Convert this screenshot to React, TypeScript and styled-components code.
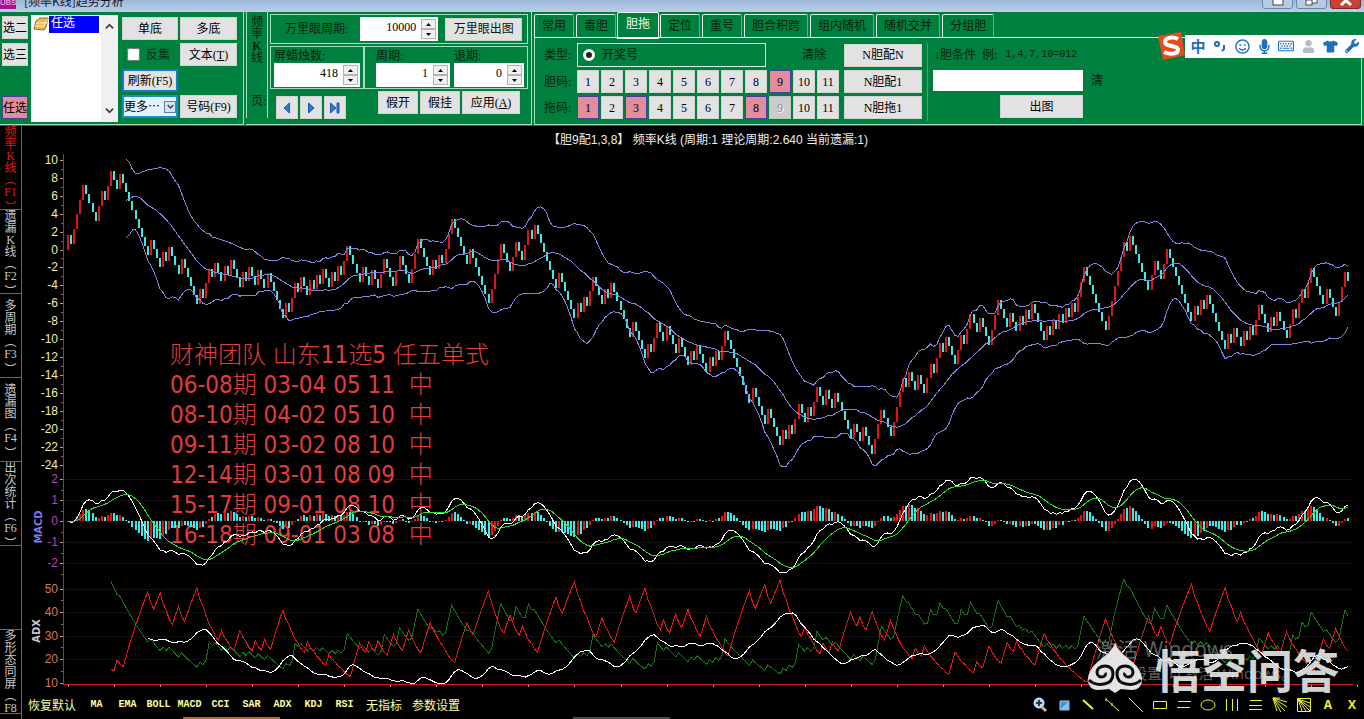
import React, { useEffect, useRef, useState } from "react";
import styled, { createGlobalStyle, css } from "styled-components";
import { FaMicrophone, FaRegKeyboard, FaRegSmile, FaTshirt, FaUser, FaWrench } from "react-icons/fa";

const GREEN = "#00803e";
const LINE = "#a8dcc0";
const TAB_LINE = "#18905c";
const UI_FONT = `"Liberation Serif", "Noto Sans CJK SC", serif`;
const HAN_FONT = `"Noto Sans CJK SC", sans-serif`;

const Global = createGlobalStyle`
  * { box-sizing: border-box; }
  body { margin: 0; background: #000; font-family: ${UI_FONT}; font-size: 12px; line-height: 14px; color: #000; }
  button, input { font: inherit; color: inherit; margin: 0; }
`;

const Page = styled.div`
  display: flex;
  flex-direction: column;
  min-height: 100vh;
  min-width: 1240px;
  overflow: hidden;
`;

/* ---------- title bar ---------- */

const TitleBar = styled.header`
  display: flex;
  align-items: flex-end;
  height: 12px;
  padding-bottom: 3px;
  overflow: hidden;
  background: linear-gradient(#9db8d8, #b9cfe8);
`;

const AppIcon = styled.span`
  width: 16px;
  height: 12px;
  background: #b0108c;
  color: #f7c6ec;
  font: 8px/12px "Liberation Sans", sans-serif;
  text-align: center;
`;

const TitleText = styled.h1`
  flex: 1;
  margin: 0 0 0 8px;
  font: 400 12px/16px ${HAN_FONT};
  color: #10182a;
`;

const WindowButtons = styled.div`
  display: flex;
  gap: 3px;
  margin-right: 3px;
`;

const WindowButton = styled.button<{ $close?: boolean }>`
  display: flex;
  align-items: flex-end;
  justify-content: center;
  width: 31px;
  height: 18px;
  padding: 0 0 2px;
  border: 1px solid ${(p) => (p.$close ? "#7c2a26" : "#6f87a6")};
  border-radius: 0 0 3px 3px;
  background: ${(p) => (p.$close ? "#c8402f" : "#b7cbe2")};
`;

/* ---------- ribbon ---------- */

const Ribbon = styled.section`
  display: flex;
  height: 114px;
  padding-bottom: 1px;
  background: ${GREEN};
`;

const Panel = styled.div`
  display: flex;
  border-bottom: 1px solid ${LINE};
  border-right: 1px solid ${LINE};
  margin-right: 2px;
`;

const Button = styled.button<{ $w?: number; $tone?: "pink" | "blue" | "focus" | "off" }>`
  display: inline-flex;
  align-items: center;
  justify-content: center;
  height: 23px;
  width: ${(p) => (p.$w ? `${p.$w}px` : "auto")};
  padding: 0;
  white-space: nowrap;
  border: 1px solid #d0d4d0;
  background: #e2e2e2;
  ${(p) => p.$tone === "pink" && css`background: #e48c9c; border-color: #46419a;`}
  ${(p) => p.$tone === "blue" && css`border: 2px solid #1477d0;`}
  ${(p) => p.$tone === "focus" && css`background: #e5f1fb; border: 2px solid #1c8cc8;`}
  ${(p) => p.$tone === "off" && css`background: #cccccc; border-color: #c0c4c0;`}
`;

const PickColumn = styled.div`
  display: flex;
  flex-direction: column;
  gap: 4px;
  padding: 4px 3px 5px 2px;
  & > :last-child { margin-top: auto; }
`;

const ListBox = styled.div`
  display: flex;
  justify-content: space-between;
  width: 87px;
  margin: 3px 4px 2px 0;
  background: #fff;
`;

const ListItem = styled.div`
  display: flex;
  height: 17px;
  margin: 1px 0 0 2px;
`;

const ListLabel = styled.span`
  width: 50px;
  padding-left: 2px;
  background: #0000ff;
  color: #fff;
  line-height: 14px;
`;

const ScrollBar = styled.div`
  display: flex;
  flex-direction: column;
  justify-content: space-between;
  align-items: center;
  width: 17px;
  padding: 7px 0;
  background: #f0f0f0;
`;

const ActionGrid = styled.div`
  display: grid;
  grid-template-columns: 56px 57px;
  grid-auto-rows: 23px;
  gap: 3px 2px;
  padding: 5px 6px 0 0;
`;

const CheckLabel = styled.label`
  display: flex;
  align-items: center;
  gap: 6px;
  padding-left: 5px;
  color: #06301a;
  input { width: 13px; height: 13px; margin: 0; }
`;

const MoreArrow = styled.span`
  display: flex;
  align-items: center;
  justify-content: center;
  width: 12px;
  height: 12px;
  margin-left: 4px;
  border: 1px solid #5c7ea8;
  background: #d3e3f6;
`;

const SideCaption = styled.div`
  display: flex;
  flex-direction: column;
  justify-content: space-between;
  width: 22px;
  padding: 4px 4px 11px 4px;
  margin-bottom: 6px;
  border-left: 1px solid ${LINE};
  border-right: 1px solid ${LINE};
  color: #04200f;
  line-height: 12px;
  text-align: center;
  white-space: nowrap;
`;

const Settings = styled.div`
  display: flex;
  flex-direction: column;
  gap: 2px;
  padding: 2px 3px 0 2px;
`;

const Group = styled.div`
  display: flex;
  align-items: center;
  border: 1px solid ${LINE};
  color: #04200f;
`;

const GroupRow = styled.div`
  display: flex;
  & > :last-child { flex: 1; }
`;

const WideField = styled.label`
  display: flex;
  align-items: center;
  gap: 12px;
  padding: 2px 7px 2px 14px;
`;

const StackField = styled.label<{ $indent: number }>`
  display: flex;
  flex-direction: column;
  padding: 2px 3px 1px ${(p) => p.$indent}px;
  & > :last-child { align-self: flex-end; }
`;

const Spin = styled.span<{ $w: number }>`
  display: inline-flex;
  align-items: center;
  width: ${(p) => p.$w}px;
  height: 24px;
  padding-right: 2px;
  background: #fff;
  color: #000;
  input {
    flex: 1;
    min-width: 0;
    height: 22px;
    padding: 0 5px 4px 0;
    border: 0;
    background: none;
    text-align: right;
  }
`;

const SpinKeys = styled.span`
  display: flex;
  flex-direction: column;
  button {
    display: flex;
    align-items: center;
    justify-content: center;
    width: 15px;
    height: 10px;
    padding: 0;
    border: 1px solid #b4b4b4;
    background: #f0f0f0;
  }
`;

const ButtonRow = styled.div`
  display: flex;
  align-items: flex-start;
  gap: 2px;
`;

const Navigator = styled.div`
  display: flex;
  gap: 2px;
  margin: 5px 30px 0 6px;
`;

/* ---------- tabbed panel ---------- */

const TabPanel = styled.div`
  flex: 1;
  display: flex;
  flex-direction: column;
  position: relative;
`;

const TabStrip = styled.div`
  display: flex;
  align-items: flex-end;
  height: 25px;
  gap: 2px;
`;

const Tab = styled.button<{ $on?: boolean }>`
  height: 23px;
  padding: 0 7px;
  border: solid;
  border-width: 1px 1px 0;
  border-color: #d8f4e4 #8a9a90 #d8f4e4 #e8fff2;
  border-radius: 2px 2px 0 0;
  background: ${GREEN};
  color: #04200f;
  white-space: nowrap;
  ${(p) => p.$on && css`
    height: 27px;
    padding: 0 8px 3px;
    margin: 0 -1px -2px;
    border-width: 1px 1px 2px;
    border-color: #f4fff8;
    color: #f4fff8;
  `}
`;

const TabBody = styled.div`
  flex: 1;
  display: flex;
  align-items: flex-start;
  margin-right: 2px;
  padding: 5px 0 0 9px;
  border: 1px solid ${LINE};
  border-top-color: #f4fff8;
`;

const CodeRows = styled.div`
  display: grid;
  grid-template-columns: 33px 267px 78px;
  row-gap: 3px;
  align-items: center;
  color: #04200f;
`;

const CodeRow = styled.div`
  display: flex;
  gap: 2px;
`;

const CodeButton = styled(Button)`
  color: #000;
  &:disabled { color: #8c8c8c; text-shadow: 1px 1px #fff; }
`;

const TypeRow = styled.div`
  display: flex;
  align-items: center;
  gap: 36px;
`;

const RadioBox = styled.label`
  display: flex;
  align-items: center;
  gap: 7px;
  width: 189px;
  height: 24px;
  padding-left: 5px;
  border: 1px solid #d8f4e4;
  input {
    appearance: none;
    width: 12px;
    height: 12px;
    margin: 0;
    border-radius: 6px;
    border: 3px solid #fff;
    background: #222;
  }
`;

const PlainButton = styled.button`
  padding: 0;
  border: 0;
  background: none;
  color: #04200f;
`;

const Divider = styled.div`
  width: 1px;
  height: 78px;
  margin: 0 5px;
  background: #6d8f7c;
`;

const Condition = styled.div`
  display: grid;
  grid-template-columns: 150px auto;
  grid-auto-rows: 23px;
  gap: 3px 8px;
  align-items: center;
  color: #04200f;
  label { display: flex; gap: 6px; grid-column: span 2; padding-left: 1px; }
  code { margin-left: 2px; font: 10px/14px "Liberation Mono", monospace; }
  input { height: 21px; padding: 0 4px; border: 0; background: #fff; }
  button:last-child { justify-self: end; color: #000; }
`;

const ImeBar = styled.div`
  position: absolute;
  right: 0;
  top: 20px;
  display: flex;
  align-items: center;
  height: 28px;
`;

const ImeStrip = styled.div`
  display: grid;
  grid-template-columns: repeat(8, 22px);
  justify-items: center;
  align-items: center;
  height: 23px;
  padding: 0 1px 0 2px;
  background: #fff;
  color: #1e6fc0;
  font: 700 15px/20px ${HAN_FONT};
`;

/* ---------- workspace ---------- */

const Workspace = styled.main`
  display: flex;
  flex: 1;
`;

const SideTabs = styled.nav`
  display: flex;
  flex-direction: column;
  width: 22px;
  border-right: 1px solid ${TAB_LINE};
`;

const SideTab = styled.button<{ $on?: boolean }>`
  display: flex;
  flex-direction: column;
  justify-content: safe center;
  align-items: center;
  height: 84px;
  padding: 0;
  border: 0;
  border-bottom: 1px solid ${TAB_LINE};
  background: #000;
  color: ${(p) => (p.$on ? "#e01818" : "#c8c8c8")};
  line-height: 12px;
  overflow: hidden;
`;

const Glyph = styled.span<{ $closing?: boolean }>`
  height: 12px;
  line-height: ${(p) => (p.$closing ? 20 : 12)}px;
`;

const Content = styled.div`
  flex: 1;
  min-width: 0;
  display: flex;
  flex-direction: column;
`;

const Canvas = styled.div`
  position: relative;
  height: 567px;
  overflow: hidden;
`;

const Plot = styled.svg`
  display: block;
  position: relative;
`;

const Memo = styled.p`
  position: absolute;
  left: 148px;
  top: 214px;
  margin: 0;
  white-space: pre;
  font: 300 24px/30px "DejaVu Sans Condensed", "Noto Sans CJK SC", sans-serif;
  color: #e23c3c;
`;

const Activation = styled.div`
  position: absolute;
  right: 68px;
  top: 510px;
  color: rgba(190, 190, 190, 0.5);
  font: 400 15px/22px "Open Sans", "Noto Sans CJK SC", sans-serif;
  white-space: nowrap;
  strong { display: block; font-weight: 400; font-size: 21px; line-height: 26px; }
`;

const Watermark = styled.div`
  position: absolute;
  right: 25px;
  top: 512px;
  display: flex;
  align-items: center;
  gap: 13px;
  color: rgba(232, 232, 232, 0.93);
  font: 700 46px/60px ${HAN_FONT};
`;

const Footer = styled.footer`
  display: flex;
  align-items: center;
  justify-content: space-between;
  height: 23px;
  padding: 0 0 0 6px;
  color: #ffff9c;
`;

const Indicators = styled.div`
  display: flex;
  align-items: center;
  gap: 10px;
`;

const Studies = styled.div`
  display: grid;
  grid-template-columns: repeat(9, 31px);
  margin: 0 -4px 0 -5px;
`;

const Indicator = styled.button<{ $han?: boolean }>`
  padding: 0;
  border: 0;
  background: none;
  color: inherit;
  font: ${(p) => (p.$han ? `12px/14px ${HAN_FONT}` : `700 10px/14px "Liberation Mono", monospace`)};
`;

const Tools = styled.div`
  display: grid;
  grid-template-columns: repeat(14, 24px);
  button {
    display: flex;
    align-items: center;
    justify-content: center;
    height: 20px;
    padding: 0;
    border: 0;
    background: none;
    color: #f4f420;
    font: 700 12px/16px "Open Sans", sans-serif;
  }
`;

const Strip = styled.div`
  display: flex;
  height: 3px;
  padding: 1px 0 0 161px;
  gap: 293px;
  i { width: 97px; background: #b06a28; }
  i + i { background: #4a4a4a; }
`;

/* ---------- series ---------- */

/* Alternating run lengths: hits, misses, hits, misses... */
const RUN_LIST = [
  1, 1, 4, 4, 2, 1, 2, 2, 1, 9, 1, 3, 1, 1, 1, 3, 1, 5, 1, 1, 2, 1, 1, 2, 1, 1, 1, 3, 1, 1, 1, 2, 1, 2, 1, 5,
  1, 1, 2, 1, 1, 2, 1, 1, 1, 1, 1, 2, 1, 1, 1, 1, 2, 4, 1, 2, 1, 2, 2, 3, 2, 3, 3, 4, 1, 1, 1, 1, 3, 5, 1, 6,
  4, 3, 2, 2, 2, 1, 1, 7, 1, 5, 1, 1, 1, 1, 2, 3, 1, 1, 1, 6, 1, 4, 1, 1, 2, 2, 1, 3, 1, 3, 1, 1, 1, 3, 1, 1,
  1, 1, 2, 8, 1, 4, 1, 4, 1, 1, 1, 1, 2, 2, 1, 1, 2, 2, 1, 2, 1, 5, 1, 2, 1, 3, 3, 3, 4, 1, 1, 2, 1, 2, 2, 1,
  2, 1, 1, 3, 2, 1, 2, 2, 1, 3, 3, 3, 1, 2, 1, 1, 1, 1, 1, 4, 1, 1, 1, 1, 1, 1, 1, 1, 1, 1, 3, 7, 6, 1, 1, 6,
  2, 2, 2, 8, 1, 1, 1, 1, 1, 6, 1, 1, 1, 2, 1, 1, 1, 1, 2, 3, 1, 1, 1, 3, 2, 1, 2, 1, 2, 4, 1, 3, 3, 1,
];

const THEORY = 2.64;

type Candle = { open: number; close: number; up: boolean };
type Point = [number, number];

function buildCandles(): Candle[] {
  const out: Candle[] = [];
  let v = 0;
  RUN_LIST.forEach((count, k) => {
    const up = k % 2 === 0;
    for (let i = 0; i < count; i++) {
      const next = v + (up ? THEORY - 1 : -1);
      out.push({ open: v, close: next, up });
      v = next;
    }
  });
  return out;
}

function ema(values: number[], n: number): number[] {
  const a = 2 / (n + 1);
  const out: number[] = [];
  values.forEach((v, i) => out.push(i === 0 ? v : out[i - 1] + a * (v - out[i - 1])));
  return out;
}

/* The centre line is a simple mean; the envelope follows the exponential one. */
function bands(close: number[]) {
  const up: Point[] = [];
  const mid: Point[] = [];
  const low: Point[] = [];
  const core = ema(close, 20);
  for (let i = 19; i < close.length; i++) {
    const w = close.slice(i - 19, i + 1);
    const m = w.reduce((a, b) => a + b, 0) / 20;
    const s = Math.sqrt(w.reduce((a, b) => a + (b - m) * (b - m), 0) / 20);
    up.push([i, core[i] + 2 * s]);
    mid.push([i, m]);
    low.push([i, core[i] - 2 * s]);
  }
  return { up, mid, low };
}

function directional(c: Candle[]) {
  const N = 14;
  let plus = 0;
  let minus = 0;
  let range = 0;
  let sum = 0;
  let adx = 0;
  const pdi: Point[] = [];
  const mdi: Point[] = [];
  const adxLine: Point[] = [];
  for (let i = 1; i < c.length; i++) {
    const hi = Math.max(c[i].open, c[i].close);
    const lo = Math.min(c[i].open, c[i].close);
    const dh = hi - Math.max(c[i - 1].open, c[i - 1].close);
    const dl = Math.min(c[i - 1].open, c[i - 1].close) - lo;
    const decay = i > N ? (N - 1) / N : 1;
    plus = plus * decay + (dh > dl && dh > 0 ? dh : 0);
    minus = minus * decay + (dl > dh && dl > 0 ? dl : 0);
    range = range * decay + (hi - lo);
    if (i < N) continue;
    pdi.push([i, (100 * plus) / range]);
    mdi.push([i, (100 * minus) / range]);
    const dx = (100 * Math.abs(plus - minus)) / (plus + minus);
    if (i <= 26) {
      sum += dx;
      adx = sum / 13;
    } else {
      adx = (adx * (N - 1) + dx) / N;
    }
    if (i >= 26) adxLine.push([i, adx]);
  }
  return { pdi, mdi, adxLine };
}

const candles = buildCandles();
const closes = candles.map((c) => c.close);
const boll = bands(closes);
const fast = ema(closes, 12);
const slow = ema(closes, 26);
const dif = fast.map((v, i) => v - slow[i]);
const dea = ema(dif, 9);
const dmi = directional(candles);

/* ---------- chart ---------- */

const AXIS_X = 41;
const FIRST_X = 46;
const BASE_Y = 559;
const priceY = (v: number) => 123.5 - 8.97 * v;
const macdY = (v: number) => 395 - 21 * v;
const adxY = (v: number) => 556.5 - 2.35 * (v - 10);

const steps = (from: number, to: number, by: number) =>
  Array.from({ length: Math.round((to - from) / by) + 1 }, (_, i) => from + i * by);

function Axis({ ticks, minor, y, color }: { ticks: number[]; minor: number[]; y: (v: number) => number; color: string }) {
  return (
    <g>
      {minor.map((v) => (
        <rect key={v} x={AXIS_X - 2} y={Math.round(y(v))} width="2" height="1" fill="#a06060" />
      ))}
      {ticks.map((v) => (
        <g key={v}>
          <rect x={AXIS_X - 3} y={Math.round(y(v))} width="3" height="1" fill="#d09090" />
          <text x={AXIS_X - 5} y={Math.round(y(v)) + 4} textAnchor="end" fill={color}>
            {v}
          </text>
        </g>
      ))}
    </g>
  );
}

function Chart() {
  const host = useRef<HTMLDivElement>(null);
  const [width, setWidth] = useState(1342);
  useEffect(() => {
    const el = host.current;
    if (!el) return;
    const measure = () => setWidth(el.clientWidth);
    measure();
    const ro = new ResizeObserver(measure);
    ro.observe(el);
    return () => ro.disconnect();
  }, []);

  const right = width - 11;
  const pitch = (right - 5 - FIRST_X) / (candles.length - 1);
  const x = (i: number) => FIRST_X + i * pitch;
  const path = (pts: Point[], y: (v: number) => number) =>
    pts.map(([i, v]) => `${x(i).toFixed(1)},${y(v).toFixed(1)}`).join(" ");
  const indexed = (vals: number[]): Point[] => vals.map((v, i) => [i, v]);

  return (
    <div ref={host}>
      <Plot width={width} height="567" fontFamily="Liberation Sans, sans-serif" fontSize="12">
        <text x={(AXIS_X + right) / 2} y="18" textAnchor="middle" fill="#f0f0f0" fontFamily="Liberation Sans, Noto Sans CJK SC, sans-serif">
          【胆9配1,3,8】 频率K线 (周期:1 理论周期:2.640 当前遗漏:1)
        </text>
        <g shapeRendering="crispEdges" fill="#ffffff" fillOpacity="0.07">
          {[2, 1, -1, -2].map((v) => (
            <rect key={v} x={AXIS_X} y={Math.round(macdY(v))} width={right - AXIS_X} height="1" />
          ))}
          {[20, 30, 40, 50].map((v) => (
            <rect key={v} x={AXIS_X} y={Math.round(adxY(v))} width={right - AXIS_X} height="1" />
          ))}
        </g>
        <Axis ticks={steps(-24, 10, 2)} minor={steps(-23, 9, 2)} y={priceY} color="#f0f09c" />
        <Axis ticks={steps(-2, 2, 1)} minor={steps(-2.5, 1.5, 1)} y={macdY} color="#b840b8" />
        <Axis ticks={steps(10, 50, 10)} minor={steps(15, 45, 10)} y={adxY} color="#d87850" />
        <text transform="translate(20 401) rotate(-90)" textAnchor="middle" fontSize="11" fontWeight="700" fontFamily="DejaVu Sans Condensed, sans-serif" fill="#7c7cf0">
          MACD
        </text>
        <text transform="translate(18 505) rotate(-90)" textAnchor="middle" fontSize="11" fontWeight="700" fontFamily="DejaVu Sans Condensed, sans-serif" fill="#c8c8c8">
          ADX
        </text>
        <g shapeRendering="crispEdges">
          <rect x={AXIS_X} y="28" width="1" height={BASE_Y - 28} fill="#d01c20" />
          <rect x={AXIS_X} y={BASE_Y - 1} width={right - AXIS_X} height="1" fill="#d01c20" />
          {steps(0, 415, 15).map((i) => (
            <rect key={i} x={Math.round(x(i))} y={BASE_Y} width="1" height="2" fill="#d09090" />
          ))}
          {candles.map((c, i) => {
            const top = Math.round(priceY(Math.max(c.open, c.close)));
            const bottom = Math.round(priceY(Math.min(c.open, c.close)));
            return (
              <rect key={i} x={Math.round(x(i)) - 1} y={top} width="2" height={bottom - top} fill={c.up ? "#e01414" : "#40e8e8"} />
            );
          })}
          {dif.map((d, i) => {
            const a = Math.round(macdY(0));
            const b = Math.round(macdY(d - dea[i]));
            return (
              <rect key={i} x={Math.round(x(i)) - 1} y={Math.min(a, b)} width="2" height={Math.max(1, Math.abs(a - b))} fill={candles[i].up ? "#f01010" : "#30f0f0"} />
            );
          })}
          <g fill="none" strokeWidth="1">
            <polyline points={path(boll.up, priceY)} stroke="#8484e4" />
            <polyline points={path(boll.mid, priceY)} stroke="#8484e4" />
            <polyline points={path(boll.low, priceY)} stroke="#8484e4" />
            <polyline points={path(indexed(dif), macdY)} stroke="#ffffff" />
            <polyline points={path(indexed(dea), macdY)} stroke="#30e030" />
            <polyline points={path(dmi.pdi, adxY)} stroke="#187018" />
            <polyline points={path(dmi.mdi, adxY)} stroke="#e01818" />
            <polyline points={path(dmi.adxLine, adxY)} stroke="#ffffff" />
          </g>
        </g>
      </Plot>
    </div>
  );
}

/* ---------- small parts ---------- */

const Chevron = ({ up, size = 9 }: { up?: boolean; size?: number }) => (
  <svg width={size} height={size} viewBox="0 0 10 10" fill="none" stroke="#404040" strokeWidth="2">
    <path d={up ? "M1 7l4-4 4 4" : "M1 3l4 4 4-4"} />
  </svg>
);

const Triangle = ({ down }: { down?: boolean }) => (
  <svg width="5" height="3" viewBox="0 0 5 3">
    <path d={down ? "M0 0h5L2.5 3z" : "M0 3h5L2.5 0z"} fill="#000" />
  </svg>
);

function SpinBox({ id, value, w }: { id: string; value: string; w: number }) {
  return (
    <Spin $w={w}>
      <input id={id} type="text" defaultValue={value} />
      <SpinKeys>
        <button type="button" aria-label="增加"><Triangle /></button>
        <button type="button" aria-label="减少"><Triangle down /></button>
      </SpinKeys>
    </Spin>
  );
}

const NavIcon = ({ kind }: { kind: "prev" | "next" | "last" }) => (
  <svg width="14" height="14" viewBox="0 0 14 14" fill="#2a78dc" stroke="#1a58b0" strokeWidth="1">
    {kind === "prev" && <path d="M9.500 2v10L4 7z" />}
    {kind === "next" && <path d="M4.500 2v10L10 7z" />}
    {kind === "last" && <path d="M2.500 2v10L8 7zM9 2h2v10H9z" />}
  </svg>
);

const CODES = Array.from({ length: 11 }, (_, i) => i + 1);

function CodeButtons({ picked, off }: { picked: number[]; off?: number }) {
  return (
    <CodeRow>
      {CODES.map((n) => (
        <CodeButton key={n} type="button" $w={22} disabled={n === off} $tone={n === off ? "off" : picked.includes(n) ? "pink" : undefined}>
          {n}
        </CodeButton>
      ))}
    </CodeRow>
  );
}

const TABS = ["常用", "毒胆", "胆拖", "定位", "重号", "胆合积跨", "组内随机", "随机交并", "分组胆"];

const SIDE = [
  ["频", "率", "K", "线", "︵", "F1", "︶"],
  ["遗", "漏", "K", "线", "︵", "F2", "︶"],
  ["多", "周", "期", "︵", "F3", "︶"],
  ["遗", "漏", "图", "︵", "F4", "︶"],
  ["出", "次", "统", "计", "︵", "F6", "︶"],
  [],
  ["多", "形", "态", "同", "屏", "︵", "F8"],
];

const STUDIES = ["MA", "EMA", "BOLL", "MACD", "CCI", "SAR", "ADX", "KDJ", "RSI"];

const TOOL_ICONS: [string, React.ReactNode][] = [
  ["缩放", <g key="z"><circle cx="7" cy="6" r="5" fill="#b8d4f0" stroke="#e8f0f8" /><path d="M4 6h6M7 3v6" stroke="#203850" strokeWidth="2" /><path d="M10 10l4 4" stroke="#e0b070" strokeWidth="3" /></g>],
  ["色块", <g key="c"><path d="M4 4h9v9H4z" fill="#4a90d8" stroke="#a8d0f4" /><path d="M5 12L12 5v7z" fill="#90c4f0" stroke="none" /></g>],
  ["线段", <path key="l1" d="M3 3l10 9" strokeWidth="2" />],
  ["直线", <path key="l2" d="M2 2l13 12M2 1v3M8 6v3" />],
  ["射线", <path key="l3" d="M1 1l14 14" />],
  ["矩形", <path key="r" d="M1.500 4.500h13v7h-13z" />],
  ["平行线", <path key="p" d="M2 4.500h13M1 10.500h13" />],
  ["椭圆", <ellipse key="e" cx="8" cy="8" rx="7" ry="5" />],
  ["竖线", <path key="v" d="M2.500 2v12M8.500 2v12M13.500 2v12" />],
  ["横线", <path key="h" d="M2 3.500h12M1 8.500h13M1 12.500h13" />],
  ["扇形", <path key="f" d="M1 1l14 4M1 1l14 9M1 1l12 13M1 1l8 14M1 1l4 13M1 1h7" />],
  ["角度线", <path key="g" d="M1.500 1.500h13v13h-13zM2 2l12 4M2 2l12 12M2 2l12 8M2 2l8 12M2 2l4 12" />],
];

export default function App() {
  return (
    <Page>
      <Global />
      <TitleBar>
        <AppIcon>UBS</AppIcon>
        <TitleText>[频率K线]趋势分析</TitleText>
        <WindowButtons>
          <WindowButton type="button" aria-label="最小化">
            <svg width="12" height="8"><rect x="1" y="1" width="10" height="6" fill="#fff" stroke="#404858" /></svg>
          </WindowButton>
          <WindowButton type="button" aria-label="还原">
            <svg width="14" height="10" fill="#fff" stroke="#404858"><rect x="4" y="1" width="8" height="6" /><rect x="1" y="4" width="6" height="5" /></svg>
          </WindowButton>
          <WindowButton type="button" aria-label="关闭" $close>
            <svg width="12" height="10" stroke="#fff" strokeWidth="3"><path d="M1 0l10 9M11 0L1 9" /></svg>
          </WindowButton>
        </WindowButtons>
      </TitleBar>

      <Ribbon>
        <Panel>
          <PickColumn>
            <Button type="button" $w={26}>选二</Button>
            <Button type="button" $w={26}>选三</Button>
            <Button type="button" $w={26} $tone="pink">任选</Button>
          </PickColumn>
          <ListBox>
            <ListItem>
              <svg width="16" height="16" viewBox="0 0 16 16">
                <path d="M1 13l2-8 4-3h8l-2 9-2 3z" fill="#e8b850" stroke="#907030" />
                <path d="M3 7h9l3-4M2 10h9l3-4" stroke="#fff4d0" fill="none" />
              </svg>
              <ListLabel>任选</ListLabel>
            </ListItem>
            <ScrollBar>
              <Chevron up />
              <Chevron />
            </ScrollBar>
          </ListBox>
          <ActionGrid>
            <Button type="button">单底</Button>
            <Button type="button">多底</Button>
            <CheckLabel><input type="checkbox" />反集</CheckLabel>
            <Button type="button">文本(<u>T</u>)</Button>
            <Button type="button" $tone="blue">刷新(F5)</Button>
            <span />
            <Button type="button" $tone="focus">
              更多⋯
              <MoreArrow><Chevron size={7} /></MoreArrow>
            </Button>
            <Button type="button">号码(F9)</Button>
          </ActionGrid>
        </Panel>

        <Panel>
          <SideCaption>
            <span>频<br />率<br /><b>K</b><br />线</span>
            <span>页:</span>
          </SideCaption>
          <Settings>
            <Group>
              <WideField htmlFor="eye">
                万里眼周期:
                <SpinBox id="eye" value="10000" w={78} />
              </WideField>
              <Button type="button" $w={77}>万里眼出图</Button>
            </Group>
            <GroupRow>
              <Group>
                <StackField htmlFor="count" $indent={3}>
                  <span>屏蜡烛数:</span>
                  <SpinBox id="count" value="418" w={86} />
                </StackField>
              </Group>
              <Group>
                <StackField htmlFor="period" $indent={11}>
                  <span>周期:</span>
                  <SpinBox id="period" value="1" w={74} />
                </StackField>
                <StackField htmlFor="back" $indent={1}>
                  <span>退期:</span>
                  <SpinBox id="back" value="0" w={70} />
                </StackField>
              </Group>
            </GroupRow>
            <ButtonRow>
              <Navigator>
                <Button type="button" $w={22} aria-label="上一页"><NavIcon kind="prev" /></Button>
                <Button type="button" $w={22} aria-label="下一页"><NavIcon kind="next" /></Button>
                <Button type="button" $w={22} aria-label="末页"><NavIcon kind="last" /></Button>
              </Navigator>
              <Button type="button" $w={40}>假开</Button>
              <Button type="button" $w={40}>假挂</Button>
              <Button type="button" $w={58}>应用(<u>A</u>)</Button>
            </ButtonRow>
          </Settings>
        </Panel>

        <TabPanel>
          <TabStrip role="tablist">
            {TABS.map((t) => (
              <Tab key={t} type="button" role="tab" aria-selected={t === "胆拖"} $on={t === "胆拖"}>{t}</Tab>
            ))}
          </TabStrip>
          <TabBody>
            <CodeRows>
              <span>类型:</span>
              <TypeRow>
                <RadioBox><input type="radio" name="type" defaultChecked />开奖号</RadioBox>
                <PlainButton type="button">清除</PlainButton>
              </TypeRow>
              <CodeButton type="button">N胆配N</CodeButton>
              <span>胆码:</span>
              <CodeButtons picked={[9]} />
              <CodeButton type="button">N胆配1</CodeButton>
              <span>拖码:</span>
              <CodeButtons picked={[1, 3, 8]} off={9} />
              <CodeButton type="button">N胆拖1</CodeButton>
            </CodeRows>
            <Divider />
            <Condition>
              <label htmlFor="cond">
                <span>↓胆条件</span>
                <span>例:</span>
                <code>1,4,7,10=012</code>
              </label>
              <input id="cond" type="text" />
              <PlainButton type="button">清</PlainButton>
              <Button type="button" $w={83}>出图</Button>
            </Condition>
          </TabBody>
          <ImeBar>
            <svg width="28" height="28" viewBox="0 0 28 28">
              <path d="M1 4L24 0l4 23-22 5z" fill="#ea4a20" />
              <path d="M21 7C15 4 8 6 8 10c0 5 13 3 13 8 0 4-8 5-14 2" fill="none" stroke="#fff" strokeWidth="4" />
            </svg>
            <ImeStrip>
              <span>中</span>
              <svg width="12" height="12" viewBox="0 0 12 12" fill="none" stroke="#1e6fc0" strokeWidth="2"><circle cx="3" cy="4" r="2" /><path d="M9 6h1v3l-2 2" /></svg>
              <FaRegSmile size={15} />
              <FaMicrophone size={15} />
              <FaRegKeyboard size={16} />
              <FaUser size={13} color="#b4bcc4" />
              <FaTshirt size={15} />
              <FaWrench size={14} />
            </ImeStrip>
          </ImeBar>
        </TabPanel>
      </Ribbon>

      <Workspace>
        <SideTabs>
          {SIDE.map((chars, i) => (
            <SideTab key={i} type="button" $on={i === 0}>
              {chars.map((c, k) => <Glyph key={k} $closing={c === "︶"}>{c}</Glyph>)}
            </SideTab>
          ))}
        </SideTabs>
        <Content>
          <Canvas>
            <Memo>
              {"财神团队 山东11选5 任五单式\n06-08期 03-04 05 11  中\n08-10期 04-02 05 10  中\n09-11期 03-02 08 10  中\n12-14期 03-01 08 09  中\n15-17期 09-01 08 10  中\n16-18期 09-01 03 08  中"}
            </Memo>
            <Chart />
            <Activation>
              <strong>激活 Windows</strong>
              转到"设置"以激活 Windows。
            </Activation>
            <Watermark>
              <svg width="54" height="50" viewBox="0 0 54 50">
                <path d="M27 0c3 8 9 12 15 17 8 6 12 13 12 20 0 6-4 10-10 10-5 0-8-1-11-1l-6 4-6-4c-3 0-6 1-11 1C4 47 0 43 0 37c0-7 4-14 12-20C18 12 24 8 27 0z" fill="#e4e4e4" />
                <g fill="none" stroke="#0c0c0c" strokeWidth="3">
                  <path d="M1 37c4 4 10 5 15 4 6-1 9-5 9-10 0-6-4-8-8-8-5 0-8 3-8 6 0 4 3 5 5 5 3 0 4-3 3-4" />
                  <path d="M53 37c-4 4-10 5-15 4-6-1-9-5-9-10 0-6 4-8 8-8 5 0 8 3 8 6 0 4-3 5-5 5-3 0-4-3-3-4" />
                </g>
              </svg>
              <span>悟空问答</span>
            </Watermark>
          </Canvas>
          <Footer>
            <Indicators>
              <Indicator type="button" $han>恢复默认</Indicator>
              <Studies>
                {STUDIES.map((n) => (
                  <Indicator key={n} type="button">{n}</Indicator>
                ))}
              </Studies>
              <Indicator type="button" $han>无指标</Indicator>
              <Indicator type="button" $han>参数设置</Indicator>
            </Indicators>
            <Tools>
              {TOOL_ICONS.map(([name, art]) => (
                <button key={name} type="button" aria-label={name}>
                  <svg width="16" height="16" viewBox="0 0 16 16" fill="none" stroke="#f4f420" strokeWidth="1">{art}</svg>
                </button>
              ))}
              <button type="button">A</button>
              <button type="button">X</button>
            </Tools>
          </Footer>
          <Strip><i /><i /></Strip>
        </Content>
      </Workspace>
    </Page>
  );
}
